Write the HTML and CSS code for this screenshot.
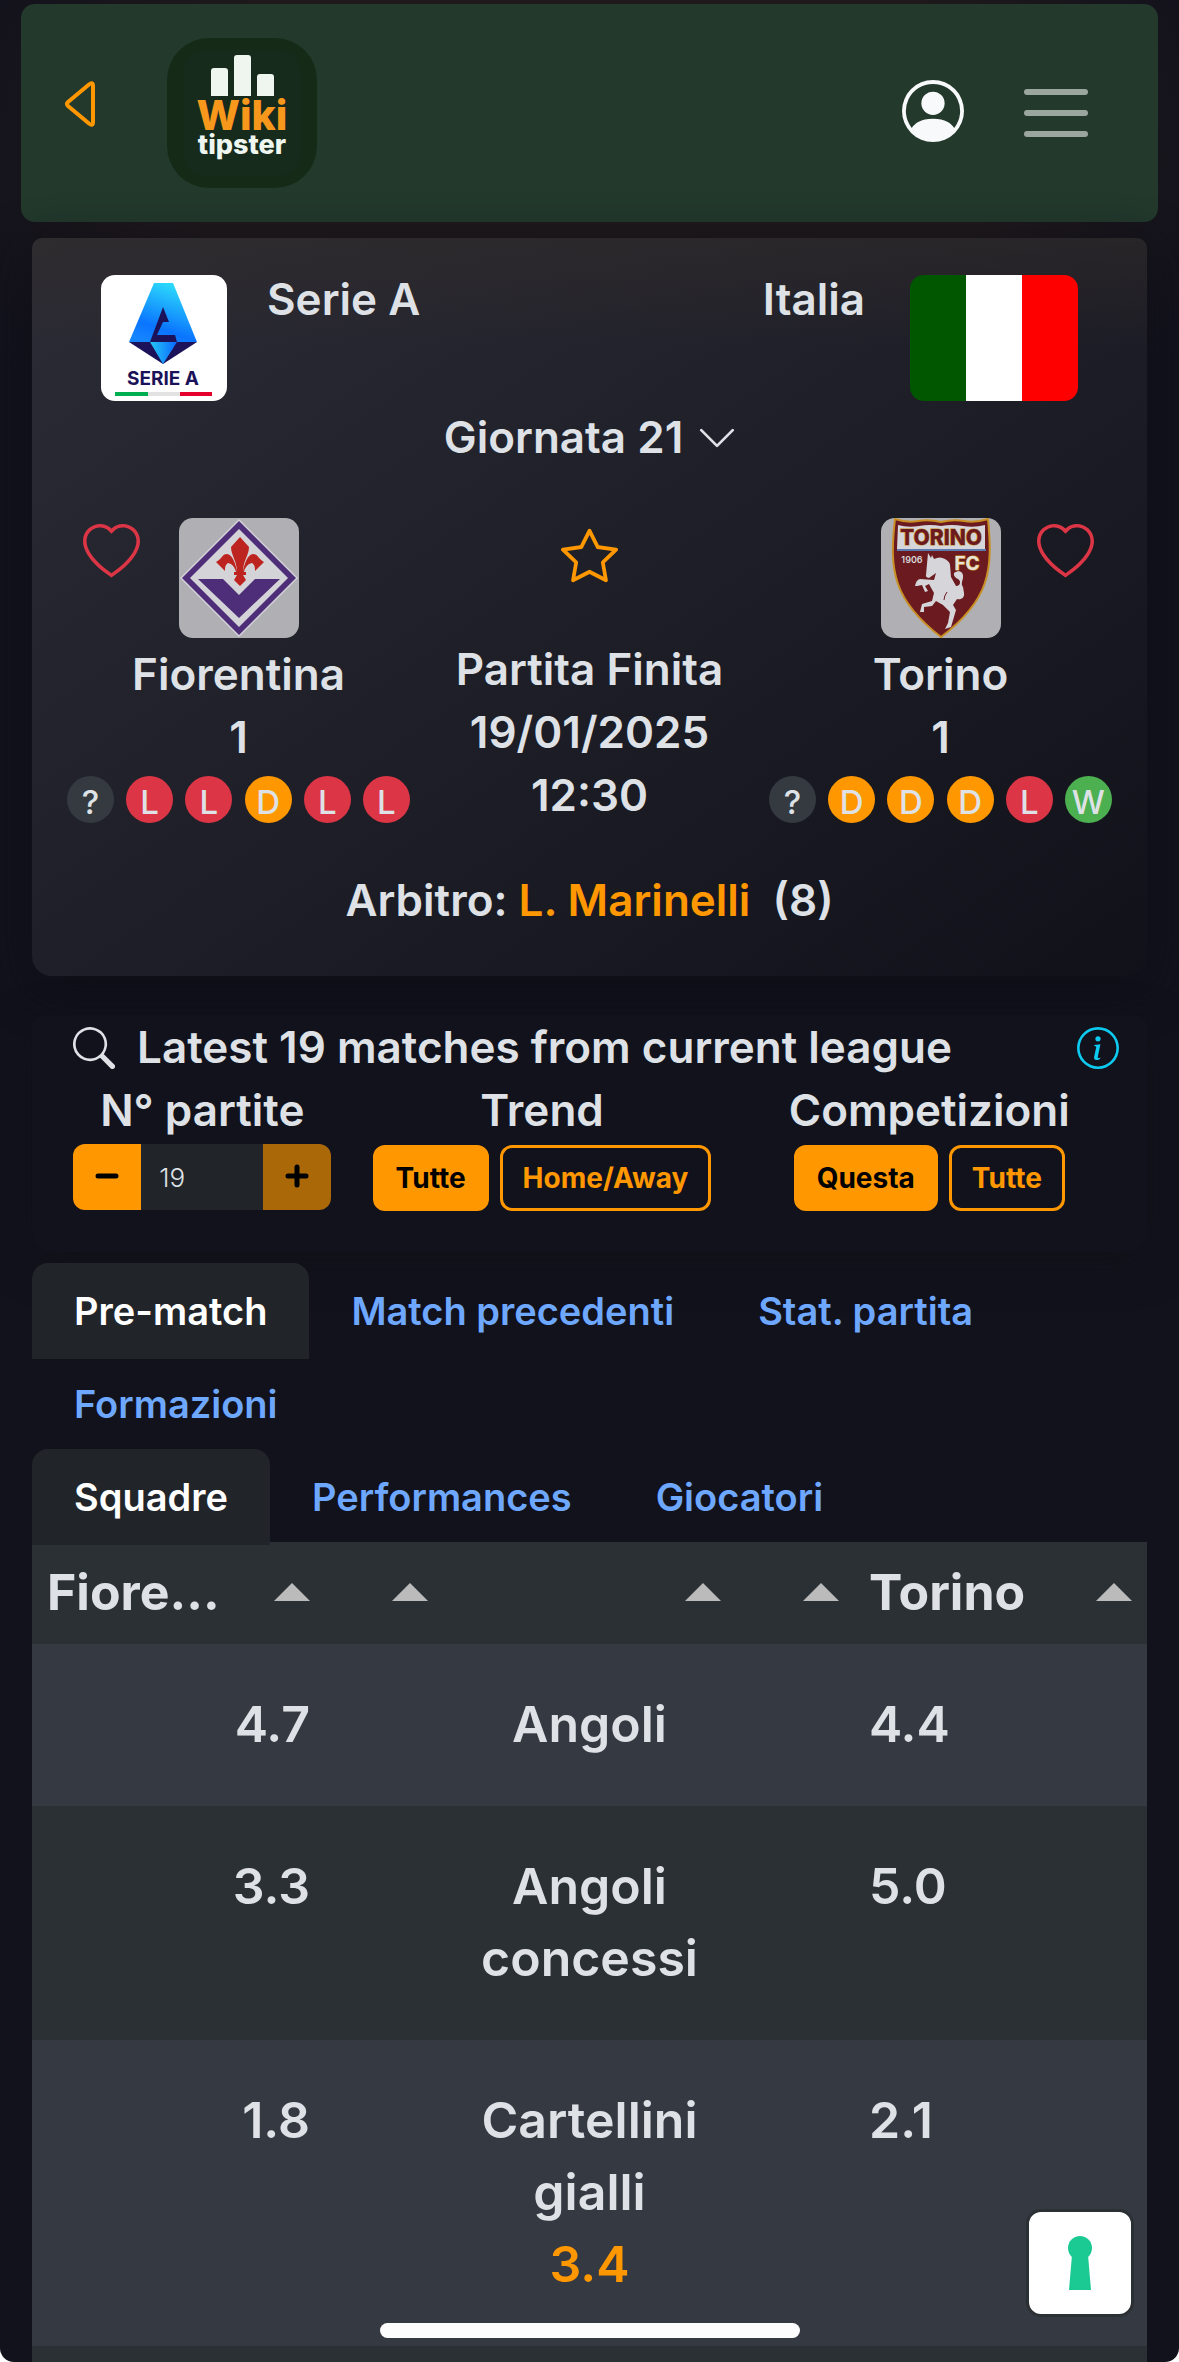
FILE: index.html
```html
<!DOCTYPE html>
<html lang="it">

<head>
  <meta charset="utf-8">
  <meta name="viewport" content="width=device-width, initial-scale=1">
  <title>Fiorentina - Torino | Wikitipster</title>
  <link rel="stylesheet" href="styles.css">
</head>

<body>
  <div class="screen">
    <header class="navbar">
      <a href="#" class="back" aria-label="Indietro">
        <svg width="48" height="48" viewBox="0 0 48 48"><path d="M36 4.500 Q40 1.500 40 6 V42 Q40 46.500 36 43.500 L15 26 Q13 24 15 22 Z" fill="none" stroke="#ff9800" stroke-width="4" stroke-linejoin="round"/></svg>
      </a>
      <a href="#" class="brand" aria-label="Wikitipster">
        <svg width="150" height="150" viewBox="0 0 150 150">
          <rect width="150" height="150" rx="42" fill="#152b17"/>
          <rect x="16" y="12" width="118" height="126" rx="22" fill="#172b1d"/>
          <path d="M44 58V33q0-3 3-3h11q3 0 3 3v25zM67 58V20q0-3 3-3h11q3 0 3 3v38zM90 58V39q0-3 3-3h11q3 0 3 3v19z" fill="#eff6f0"/>
          <text text-anchor="middle"><tspan x="75" y="92" class="brand-wiki">Wiki</tspan><tspan x="75" y="116" class="brand-tip">tipster</tspan></text>
        </svg>
      </a>
      <a href="#" class="user" aria-label="Profilo">
        <svg width="62" height="62" viewBox="0 0 16 16" fill="#f8f9fa"><path d="M11 6a3 3 0 1 1-6 0 3 3 0 0 1 6 0"/><path fill-rule="evenodd" d="M0 8a8 8 0 1 1 16 0A8 8 0 0 1 0 8m8-7a7 7 0 0 0-5.468 11.370C3.242 11.226 4.805 10 8 10s4.757 1.225 5.468 2.370A7 7 0 0 0 8 1"/></svg>
      </a>
      <button class="toggler" aria-label="Menu"><span></span><span></span><span></span></button>
    </header>

    <main>
      <section class="card match">
        <div class="league-row">
          <svg class="league-logo" width="126" height="126" viewBox="0 0 126 126">
            <defs>
              <linearGradient id="ga" x1="0.700" y1="0" x2="0.300" y2="1"><stop offset="0" stop-color="#2fe0fb"/><stop offset="0.750" stop-color="#0a74ff"/><stop offset="1" stop-color="#1585ff"/></linearGradient>
              <linearGradient id="gb" x1="0" y1="0" x2="1" y2="0"><stop offset="0" stop-color="#25c8f5"/><stop offset="1" stop-color="#0a68ff"/></linearGradient>
            </defs>
            <rect width="126" height="126" rx="14" fill="#fff"/>
            <path d="M53 8h19l24 59H28z" fill="url(#ga)"/>
            <path d="M62 32l6 15h-6l-6 13h18l2 7H49z" fill="#1b1259"/>
            <path d="M28 67h68L62 89z" fill="#1b1259"/>
            <path d="M49 67h27L62 89z" fill="url(#gb)"/>
            <text x="62" y="110" text-anchor="middle" class="seriea">SERIE A</text>
            <path d="M14 117h33v4H14z" fill="#00b050"/><path d="M47 117h32v4H47z" fill="#e2e2e2"/><path d="M79 117h32v4H79z" fill="#e4002b"/>
          </svg>
          <span class="league-name">Serie A</span>
          <span class="country">Italia</span>
          <span class="flag"></span>
        </div>
        <button class="round">Giornata 21
          <svg width="36" height="36" viewBox="0 0 16 16"><path d="M1 4.500l7 7 7-7" fill="none" stroke="#dee2e6" stroke-width="1.200" stroke-linecap="round" stroke-linejoin="round"/></svg>
        </button>

        <div class="teams">
          <div class="team">
            <div class="team-head">
              <button class="fav" aria-label="Preferita"><svg width="57" height="57" viewBox="0 0 16 16" fill="#dc3545"><path d="m8 2.748-.717-.737C5.600.281 2.514.878 1.400 3.053c-.523 1.023-.641 2.500.314 4.385.920 1.815 2.834 3.989 6.286 6.357 3.452-2.368 5.365-4.542 6.286-6.357.955-1.886.838-3.362.314-4.385C13.486.878 10.400.280 8.717 2.010zM8 15C-7.333 4.868 3.279-3.040 7.824 1.143q.090.083.176.171a3 3 0 0 1 .176-.170C12.720-3.042 23.333 4.867 8 15"/></svg></button>
              <svg class="crest" width="120" height="120" viewBox="0 0 120 120">
                <rect width="120" height="120" rx="14" fill="#b0b0b4"/>
                <path d="M60 1l59 59-59 59L1 60z" fill="#d4d3d8"/>
                <path d="M60 3l57 57-57 57L3 60z" fill="#4f2e79"/>
                <path d="M60 11l49 49-49 49-49-49z" fill="#d4d3d8"/>
                <path d="M19 61h25l16 16 16-16h25l-41 39z" fill="#4f2e79"/>
                <path d="M61 19l9 10c0 8-6 14-6 25 1-8 5-18 10-18 5 0 5 5 11 8l-9 9c0-3 0-6-3-8-5 1-7 5-8 9h2v3h-3l3 5-6 6-6-6 3-5h-3v-3h2c-1-4-3-8-8-9-3 2-3 5-3 8l-9-9c6-3 6-8 11-8 5 0 9 10 10 18 0-11-6-17-6-25z" fill="#bd241f"/>
              </svg>
            </div>
            <div>Fiorentina</div>
            <div>1</div>
            <div class="form">
              <span class="res">?</span><span class="res l">L</span><span class="res l">L</span><span class="res d">D</span><span class="res l">L</span><span class="res l">L</span>
            </div>
          </div>

          <div class="info">
            <button class="fav" aria-label="Segui partita"><svg width="57" height="57" viewBox="0 0 16 16" fill="#ff9800"><path d="M2.866 14.850c-.078.444.360.791.746.593l4.390-2.256 4.389 2.256c.386.198.824-.149.746-.592l-.830-4.730 3.522-3.356c.330-.314.160-.888-.282-.950l-4.898-.696L8.465.792a.513.513 0 0 0-.927 0L5.354 5.120l-4.898.696c-.441.062-.612.636-.283.950l3.523 3.356-.830 4.730zm4.905-2.767-3.686 1.894.694-3.957a.560.560 0 0 0-.163-.505L1.710 6.745l4.052-.576a.530.530 0 0 0 .393-.288L8 2.223l1.847 3.658a.530.530 0 0 0 .393.288l4.052.575-2.906 2.770a.560.560 0 0 0-.163.506l.694 3.957-3.686-1.894a.500.500 0 0 0-.461 0z"/></svg></button>
            <div>Partita Finita</div>
            <div>19/01/2025</div>
            <div>12:30</div>
          </div>

          <div class="team">
            <div class="team-head away">
              <svg class="crest" width="120" height="120" viewBox="0 0 120 120">
                <rect width="120" height="120" rx="14" fill="#b0b0b4"/>
                <path d="M14 1q12 4 23 2t23 1q12-3 23-1t24-2C112 52 109 82 60 119 12 82 8 52 14 1z" fill="#6b1b20" stroke="#c98f24" stroke-width="2"/>
                <path d="M17 7q10 3 21 1t22 0q11-2 22 0t22-1v24H16z" fill="#d6d5d9"/>
                <path d="M16 31h89v2H16z" fill="#5c7bb0"/>
                <text x="60" y="27" text-anchor="middle" class="torino">TORINO</text>
                <text x="31" y="45" text-anchor="middle" class="year">1906</text>
                <text x="86" y="52" text-anchor="middle" class="fc">FC</text>
                <path d="M47 35l3 5 1-3 2 4q6-3 11 0t5 6l1 12 5 9q4 0 4-4c-1-4-7-4-6-9 5-4 10-1 9 5-1 4-2 6 0 9l1 6c1 6-5 7-7 6l-4 6 3 5-5 17-6 2 3-6 2-11-7-7-7-4-4 5-8 1v5h-4l2-8 10-3 2-8-5-9-4 2 3 5-3 1-3-7-5 1-2 0q1-6 5-7l14 1 2-7-7 5q-4-1-3-3z" fill="#d6d5d9"/>
                <path d="M66 74q-3 4-3 8M73 62q6-2 5 3" fill="none" stroke="#6b1b20" stroke-width="1"/>
              </svg>
              <button class="fav" aria-label="Preferita"><svg width="57" height="57" viewBox="0 0 16 16" fill="#dc3545"><path d="m8 2.748-.717-.737C5.600.281 2.514.878 1.400 3.053c-.523 1.023-.641 2.500.314 4.385.920 1.815 2.834 3.989 6.286 6.357 3.452-2.368 5.365-4.542 6.286-6.357.955-1.886.838-3.362.314-4.385C13.486.878 10.400.280 8.717 2.010zM8 15C-7.333 4.868 3.279-3.040 7.824 1.143q.090.083.176.171a3 3 0 0 1 .176-.170C12.720-3.042 23.333 4.867 8 15"/></svg></button>
            </div>
            <div>Torino</div>
            <div>1</div>
            <div class="form">
              <span class="res">?</span><span class="res d">D</span><span class="res d">D</span><span class="res d">D</span><span class="res l">L</span><span class="res w">W</span>
            </div>
          </div>
        </div>

        <div class="referee">Arbitro: <a href="#">L. Marinelli</a>&nbsp; (8)</div>
      </section>

      <section class="card filters">
        <div class="filters-head">
          <svg width="42" height="42" viewBox="0 0 16 16" fill="#dee2e6"><path d="M11.742 10.344a6.500 6.500 0 1 0-1.397 1.398h-.001q.044.060.098.115l3.850 3.850a1 1 0 0 0 1.415-1.414l-3.850-3.850a1 1 0 0 0-.115-.100zM12 6.500a5.500 5.500 0 1 1-11 0 5.500 5.500 0 0 1 11 0"/></svg>
          <span>Latest 19 matches from current league</span>
          <a href="#" class="help" aria-label="Info"><svg width="42" height="42" viewBox="0 0 16 16" fill="#0dcaf0"><path d="M8 15A7 7 0 1 1 8 1a7 7 0 0 1 0 14m0 1A8 8 0 1 0 8 0a8 8 0 0 0 0 16"/><path d="m8.930 6.588-2.290.287-.082.380.450.083c.294.070.352.176.288.469l-.738 3.468c-.194.897.105 1.319.808 1.319.545 0 1.178-.252 1.465-.598l.088-.416c-.200.176-.492.246-.686.246-.275 0-.375-.193-.304-.533zM9 4.500a1 1 0 1 1-2 0 1 1 0 0 1 2 0"/></svg></a>
        </div>
        <div class="filter-grid">
          <div class="filter">
            <label for="num">N° partite</label>
            <div class="stepper">
              <button aria-label="Meno"><svg width="36" height="36" viewBox="0 0 36 36"><path d="M9 17h18" stroke="#000" stroke-width="5" stroke-linecap="round"/></svg></button>
              <input id="num" type="text" inputmode="numeric" value="19">
              <button class="off" aria-label="Più"><svg width="36" height="36" viewBox="0 0 36 36"><path d="M9 17h18M18 8v18" stroke="#000" stroke-width="5" stroke-linecap="round"/></svg></button>
            </div>
          </div>
          <div class="filter">
            <span>Trend</span>
            <div class="btns"><button class="btn on">Tutte</button><button class="btn">Home/Away</button></div>
          </div>
          <div class="filter">
            <span>Competizioni</span>
            <div class="btns"><button class="btn on">Questa</button><button class="btn">Tutte</button></div>
          </div>
        </div>
      </section>

      <nav class="tabs">
        <a href="#" class="active">Pre-match</a>
        <a href="#">Match precedenti</a>
        <a href="#">Stat. partita</a>
        <a href="#">Formazioni</a>
      </nav>
      <nav class="tabs">
        <a href="#" class="active">Squadre</a>
        <a href="#">Performances</a>
        <a href="#">Giocatori</a>
      </nav>

      <table class="stats">
        <colgroup><col><col class="c-gap"><col><col class="c-gap"><col></colgroup>
        <thead>
          <tr>
            <th><div class="th">Fiore...<i class="arrow"></i></div></th>
            <th><div class="th"><i class="arrow"></i></div></th>
            <th><div class="th"><i class="arrow"></i></div></th>
            <th><div class="th"><i class="arrow"></i></div></th>
            <th><div class="th">Torino<i class="arrow"></i></div></th>
          </tr>
        </thead>
        <tbody>
          <tr><td class="home">4.7</td><td></td><td class="stat">Angoli</td><td></td><td>4.4</td></tr>
          <tr><td class="home">3.3</td><td></td><td class="stat">Angoli concessi</td><td></td><td>5.0</td></tr>
          <tr><td class="home">1.8</td><td></td><td class="stat">Cartellini gialli<br><b>3.4</b></td><td></td><td>2.1</td></tr>
          <tr><td class="home"></td><td></td><td class="stat"></td><td></td><td></td></tr>
        </tbody>
      </table>
    </main>

    <button class="unlock" aria-label="Sblocca">
      <svg width="26" height="54" viewBox="0 0 26 54" fill="#1bc992"><circle cx="13" cy="12" r="12"/><path d="M5 19h16l3 35H2z"/></svg>
    </button>
    <div class="home-bar"></div>
  </div>
</body>

</html>
```
FILE: styles.css
```css
* {
  box-sizing: border-box;
}

html {
  background: #fff;
}

body {
  margin: 0;
  font-family: "Inter", "Liberation Sans", sans-serif;
  font-size: 44px;
  font-weight: 600;
  line-height: 63px;
  color: #dee2e6;
}

button {
  font: inherit;
  color: inherit;
  background: none;
  border: 0;
  padding: 0;
}

a {
  text-decoration: none;
}

svg {
  display: block;
}

.screen {
  position: relative;
  height: 100vh;
  overflow: hidden;
  padding-top: 4px;
  border-radius: 0 0 14px 14px;
  background: radial-gradient(ellipse 56% 420px at 50% 160px, #1f191b 60%, rgba(31, 25, 27, 0)), #12121c;
}

/* top bar */
.navbar {
  display: flex;
  align-items: center;
  height: 218px;
  margin: 0 21px;
  padding: 0 70px 0 32px;
  border-radius: 14px;
  background: #23392c;
}

.back {
  margin-bottom: 18px;
}

.brand {
  margin-left: 66px;
}

.brand-wiki {
  font-size: 41px;
  font-weight: 800;
  fill: #f7981d;
}

.brand-tip {
  font-size: 27px;
  font-weight: 800;
  fill: #eff6f0;
}

.user {
  margin-left: auto;
  margin-bottom: 4px;
}

.toggler {
  display: flex;
  flex-direction: column;
  gap: 15px;
  width: 64px;
  margin-left: 60px;
}

.toggler span {
  height: 6px;
  border-radius: 3px;
  background: #9ba69e;
}

main {
  padding: 16px 32px 0;
}

.card {
  border-radius: 10px 10px 20px 20px;
}

/* match card */
.match {
  height: 738px;
  padding-top: 37px;
  text-align: center;
  background: linear-gradient(to bottom, rgba(50, 44, 40, 0.5), rgba(50, 44, 40, 0) 110px), linear-gradient(145deg, #2c2c36, #11111a);
  box-shadow: 0 12px 48px rgba(14, 14, 22, 0.9);
}

.league-row {
  display: flex;
  align-items: flex-start;
  padding: 0 69px;
  line-height: 48px;
}

.league-name {
  margin-left: 40px;
}

.country {
  margin-left: auto;
  margin-right: 45px;
}

.flag {
  width: 168px;
  height: 126px;
  border-radius: 14px;
  background: linear-gradient(to right, #005700 33.3%, #fff 33.3%, #fff 66.7%, #f00 66.7%);
}

.round {
  display: inline-flex;
  align-items: center;
  gap: 16px;
  margin-top: 5px;
}

.teams {
  display: flex;
  justify-content: space-between;
  padding: 0 35px;
  margin-top: 49px;
}

.team {
  width: 343px;
}

.team-head {
  display: flex;
  align-items: flex-start;
  gap: 39px;
  padding-left: 16px;
  margin-bottom: 5px;
}

.team-head .fav {
  margin-top: 6px;
}

.team-head.away {
  justify-content: flex-end;
  gap: 36px;
  padding: 0 18px 0 0;
}

.form {
  display: flex;
  justify-content: space-between;
  margin-top: 7px;
}

.res {
  width: 47px;
  height: 47px;
  border-radius: 50%;
  background: #343a40;
  font-size: 33px;
  font-weight: 500;
  line-height: 53px;
}

.res.l {
  background: #dc3545;
}

.res.d {
  background: #ff9800;
}

.res.w {
  background: #4caf50;
}

.info .fav {
  margin: 9px 0 54px;
}

.info svg {
  margin: auto;
}

.referee {
  margin-top: 42px;
}

.referee a {
  color: #ff9800;
}

/* svg lettering */
.seriea {
  font-size: 19px;
  font-weight: 700;
  fill: #1b1259;
}

.torino {
  font-size: 21px;
  font-weight: 800;
  fill: #6b1b20;
  stroke: #c98f24;
  stroke-width: 1px;
  paint-order: stroke;
}

.year {
  font-size: 9px;
  fill: #d6d5d9;
}

.fc {
  font-size: 19px;
  font-weight: 700;
  fill: #e6e2d8;
  stroke: #c98f24;
  stroke-width: 1px;
  paint-order: stroke;
}

/* filters */
.filters {
  margin-top: 40px;
  height: 236px;
  background: #12121c;
  box-shadow: 0 12px 40px rgba(16, 16, 22, 0.6);
}

.filters-head {
  display: flex;
  align-items: center;
  padding: 0 28px 0 41px;
}

.filters-head span {
  margin-left: 22px;
}

.help {
  margin-left: auto;
}

.filter-grid {
  display: grid;
  grid-template-columns: 61fr 60fr 78fr;
  text-align: center;
}

.filter {
  display: flex;
  flex-direction: column;
  align-items: center;
}

.btns {
  display: flex;
  gap: 11px;
  margin-top: 3px;
}

.btn {
  height: 66px;
  padding: 0 20px;
  border: 3px solid #ff9800;
  border-radius: 12px;
  font-size: 28px;
  font-weight: 700;
  line-height: 36px;
  color: #ff9800;
}

.btn.on {
  background: #ff9800;
  color: #000;
}

.stepper {
  display: flex;
  width: 258px;
  height: 66px;
  margin-top: 2px;
  overflow: hidden;
  border-radius: 12px;
}

.stepper button {
  width: 68px;
  background: #ff9800;
}

.stepper button svg {
  margin: auto;
}

.stepper .off {
  background: #aa6809;
}

.stepper input {
  flex: 1;
  min-width: 0;
  padding: 0 18px;
  border: 0;
  background: #212529;
  color: #dee2e6;
  font: inherit;
  font-size: 26px;
  font-weight: 300;
}

/* tabs */
.tabs {
  display: flex;
  flex-wrap: wrap;
}

.filters + .tabs {
  margin-top: 11px;
}

.tabs a {
  height: 96px;
  margin-bottom: -3px;
  padding: 21px 42px 0;
  border-radius: 16px 16px 0 0;
  font-size: 38px;
  line-height: 54px;
  color: #6ea8fe;
}

.tabs .active {
  background: #212529;
  color: #fff;
}

/* stats table */
.stats {
  width: 100%;
  table-layout: fixed;
  border-collapse: collapse;
  font-size: 50px;
  line-height: 72px;
}

.c-gap {
  width: 118px;
}

.stats th {
  padding: 14px 15px 16px;
  font-weight: 700;
  background: #2b3034;
}

.th {
  display: flex;
  align-items: center;
  height: 72px;
}

.arrow {
  margin-left: auto;
  border: 18px solid transparent;
  border-top: 0;
  border-bottom-color: #bbb;
}

.stats td {
  height: 162px;
  padding: 44px 15px 46px;
  vertical-align: top;
  background: #2b3034;
}

.stats tbody tr:nth-child(odd) td {
  background: #353941;
}

.stats .home {
  text-align: right;
}

.stats .stat {
  text-align: center;
}

.stats b {
  font-weight: 600;
  color: #ff9800;
}

/* overlays */
.unlock {
  position: absolute;
  right: 45px;
  bottom: 45px;
  width: 108px;
  height: 108px;
  border: 3px solid #2b3034;
  border-radius: 15px;
  background: #fff;
}

.unlock svg {
  margin: auto;
}

.home-bar {
  position: absolute;
  left: 50%;
  bottom: 24px;
  width: 420px;
  height: 15px;
  margin-left: -210px;
  border-radius: 8px;
  background: #fdfdfd;
}
```
